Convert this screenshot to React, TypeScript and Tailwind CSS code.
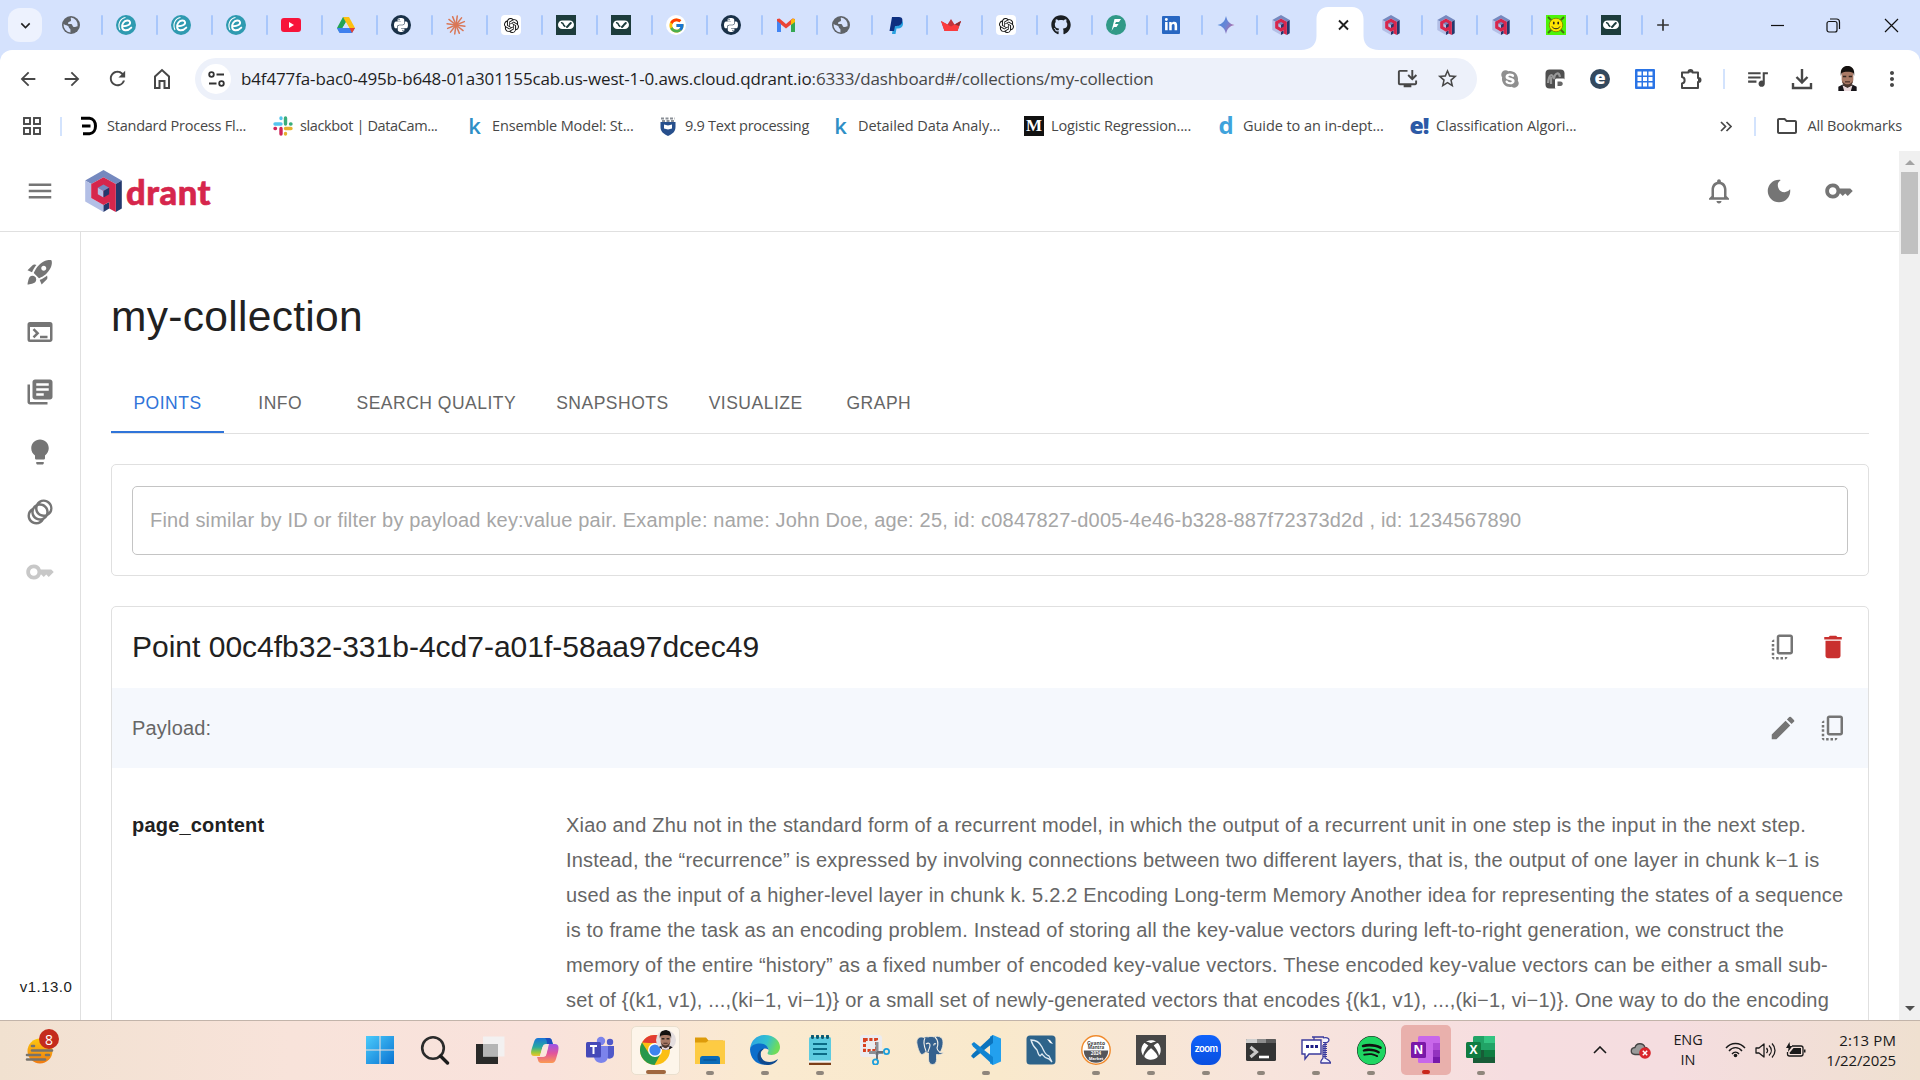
import React from "react";
import {
  MdMenu, MdRocketLaunch, MdTerminal, MdLibraryBooks, MdLightbulb, MdAnimation, MdKey,
  MdOutlineNotifications, MdDarkMode, MdCopyAll, MdDelete, MdEdit, MdArrowBack, MdArrowForward,
  MdRefresh, MdInstallDesktop, MdStarBorder, MdQueueMusic,
  MdMoreVert, MdOutlineFolder, MdExpandMore, MdAdd,
} from "react-icons/md";
import { FaGithub, FaPaypal, FaLinkedinIn, FaXbox, FaSpotify, FaSkype, FaPython } from "react-icons/fa";
import { SiOpenai } from "react-icons/si";
import { FcGoogle } from "react-icons/fc";

type Kids = { children?: React.ReactNode; className?: string };

/* ---------- favicons ---------- */

const Svg = ({ children, className = "size-5", box = "0 0 20 20" }: Kids & { box?: string }) => (
  <svg viewBox={box} className={`${className} shrink-0`} fill="none">{children}</svg>
);

const Globe = () => (
  <Svg>
    <circle cx="10" cy="10" r="9" fill="#5f6368" />
    <path d="M10 2.500c-1 1.500.8 2.200-.2 3.400-.9 1-2.500.4-2.800 2-.2 1.200 1.200 1.200 2.800 1.200 2 0 1.200 2.600 3 2.900 1.700.2 2-.8 3.800-.8A7.500 7.500 0 0 0 10 2.500zM2.600 9c1.600 1.600 5 1 5.200 3.200.1 1.500 1.800 1 1.700 2.800-.1 1-.2 1.600.1 2.400A7.500 7.500 0 0 1 2.600 9z" fill="#d6e2fd" />
  </Svg>
);

const Teal = () => (
  <Svg>
    <circle cx="10" cy="10" r="10" fill="#2f9ab0" />
    <path d="M7 11.200c4.500 0 7.800-1.800 7-4.200-.8-2.300-4.700-2-6.700.8-2.100 3-1.600 7.200 2 7.500 2.300.2 4.400-1 6-2.700" stroke="#fff" strokeWidth="1.900" strokeLinecap="round" />
    <path d="M4 15C1.200 9 4.500 3.200 9.500 2.500" stroke="#fff" strokeWidth="1.100" />
  </Svg>
);

const Youtube = () => (
  <Svg>
    <rect y="3" width="20" height="14" rx="3" fill="#f7143a" />
    <path d="M8 7l5 3-5 3z" fill="#fff" />
  </Svg>
);

const Drive = () => (
  <Svg>
    <path d="M7 2h6l-6.800 11.500L3.500 17.500 1 13z" fill="#23a455" />
    <path d="M7 2h6l6 11h-6z" fill="#fdc00f" />
    <path d="M4.300 13H19l-3 5H3.500L1 13z" fill="#3f80ee" />
    <path d="M19 13h-5.500l2.500 5z" fill="#e8402f" />
    <path d="M10 7.200L6.600 13h6.800z" fill="#d6e2fd" />
  </Svg>
);

const Py = () => (
  <span className="flex size-5 items-center justify-center rounded-full bg-[#1a3148]">
    <FaPython className="size-[16px] text-white" />
  </span>
);

const Claude = () => (
  <Svg>
    {[0, 30, 60, 90, 120, 150, 180, 210, 240, 270, 300, 330].map((a) => (
      <path key={a} d="M10 10V1" stroke="#d97757" strokeWidth="1.500" strokeLinecap="round" transform={`rotate(${a + 8} 10 10)`} />
    ))}
  </Svg>
);

const Gpt = () => (
  <span className="flex size-5 items-center justify-center rounded-[4px] bg-white">
    <SiOpenai className="size-[15px] text-[#111]" />
  </span>
);

const Lang = () => (
  <Svg>
    <rect width="20" height="20" fill="#1d3c3c" />
    <rect x="2" y="5.500" width="16" height="8.500" rx="4.250" fill="#fff" />
    <path d="M5 7.800c1.500-.4 2.300.8 2.800 2.400l1.500 1.500" stroke="#1d3c3c" strokeWidth="1.600" />
    <path d="M11 12l1.500-1.500M13 9.800L14.800 8" stroke="#1d3c3c" strokeWidth="2" strokeLinecap="round" />
  </Svg>
);

const Google = () => (
  <span className="flex size-5 items-center justify-center rounded-full bg-white"><FcGoogle className="size-[17px]" /></span>
);

const Gmail = () => (
  <Svg>
    <path d="M1 4v13h4V9.500l5 4 5-4V17h4V4l-2.500-.5L10 9 3.500 3.500z" fill="#ea4335" />
    <path d="M1 6v11h4V9z" fill="#4285f4" />
    <path d="M15 9v8h4V6z" fill="#34a853" />
    <path d="M15 5.200l2-1.700 2 1V7l-4 3z" fill="#fbbc04" />
  </Svg>
);

const Paypal = () => (
  <Svg>
    <path d="M8 6h8c2 1 1.500 7.500-4 7.500h-1.500L9.500 19H6z" fill="#2aa1e0" />
    <path d="M6 2h7c3.500 0 4 3 3 5.500-1 2.800-3 3.500-7 3.500L8 16H3.500z" fill="#0d2f80" />
  </Svg>
);

const Streamlit = () => (
  <Svg>
    <path d="M0 6l6.500 3.500L10 4l3.500 5.500L20 6l-3.500 10h-13z" fill="#c3343c" />
    <path d="M0 6l10 5.500L20 6l-3.500 10h-13z" fill="#fb3b3e" />
    <path d="M14 9.500L20 6l-2 5z" fill="#7d353b" />
  </Svg>
);

const Github = () => <FaGithub className="size-5 text-[#1b1f23]" />;

const Flash = () => (
  <Svg>
    <circle cx="10" cy="10" r="10" fill="#319987" />
    <path d="M8.500 4h6.500l-2 3h-3l-1 2h3.500l-2 3H8L5.500 16z" fill="#fff" />
  </Svg>
);

const Linkedin = () => (
  <span className="flex size-[18px] items-center justify-center rounded-[1px] bg-[#2867c2]"><FaLinkedinIn className="size-[14px] text-white" /></span>
);

const Gemini = () => (
  <Svg>
    <defs>
      <linearGradient id="gem" x1="0" y1="0" x2="20" y2="10" gradientUnits="userSpaceOnUse">
        <stop stopColor="#3c8bd9" /><stop offset=".6" stopColor="#6a85d6" /><stop offset="1" stopColor="#c0669c" />
      </linearGradient>
    </defs>
    <path d="M10 1c1.200 5.300 3.500 8 8.500 9-5 1-7.300 3.700-8.500 9-1.200-5.300-3.500-8-8.500-9 5-1 7.300-3.700 8.500-9z" fill="url(#gem)" />
  </Svg>
);

const Cube = ({ className = "h-5 w-[18px]" }: Kids) => (
  <Svg className={className} box="0 0 36.6 42">
    <path d="M18.300 0L36.600 10.500 30.600 14 18.300 7.300 6 14 0 10.500z" fill="#7589bf" />
    <path d="M0 10.500L6 14v14l12.300 7v7L0 31.500z" fill="#b3bfe6" />
    <path d="M36.600 10.500v28L30.600 42V14zM18.300 35l5.700-3v6.600L18.300 42z" fill="#24386c" />
    <path d="M18.300 7.300L30.600 14v28L24 38.600V32l-5.700 3L6 28V14z" fill="#d6264c" />
    <path d="M18.300 14.600L24 17.700l-5.700 3.200-5.700-3.200z" fill="#7589bf" />
    <path d="M12.600 17.700l5.700 3.200v6.600l-5.700-3.200z" fill="#b3bfe6" />
    <path d="M24 17.700l-5.700 3.200v6.600l5.700-3.200z" fill="#24386c" />
  </Svg>
);

const Smiley = () => (
  <Svg>
    <rect width="20" height="20" fill="#4df50a" />
    <path d="M2 2l16 16M18 2L2 18" stroke="#4a6b10" strokeWidth="1.800" />
    <circle cx="10" cy="10" r="6.800" fill="#ffe600" stroke="#7a7a00" strokeWidth=".8" />
    <ellipse cx="7.800" cy="8" rx=".9" ry="1.500" fill="#222" /><ellipse cx="12.200" cy="8" rx=".9" ry="1.500" fill="#222" />
    <path d="M6 11.500c1.500 3 6.500 3 8 0" stroke="#222" strokeWidth="1" />
  </Svg>
);

/* ---------- browser tab strip ---------- */

const tabsBefore = [Globe, Teal, Teal, Teal, Youtube, Drive, Py, Claude, Gpt, Lang, Lang, Google, Py, Gmail, Globe, Paypal, Streamlit, Gpt, Github, Flash, Linkedin, Gemini, Cube];
const tabsAfter = [Cube, Cube, Cube, Smiley, Lang];

const Tab = ({ icon: Icon, sep }: { icon: React.ComponentType; sep: boolean }) => (
  <div className="flex h-full w-[55px] shrink-0 items-center justify-between pl-[13px]">
    <span className="flex w-5 justify-center"><Icon /></span>
    {sep && <span className="h-5 w-[2.5px] rounded-full bg-[#a9c7fb]" />}
  </div>
);

const TabStrip = () => (
  <div className="flex h-[50px] items-center bg-[#d5e2fd]">
    <button className="ml-2 mr-[6px] flex h-[34px] w-[34px] shrink-0 items-center justify-center rounded-xl bg-[#edf2fe]">
      <MdExpandMore className="size-[19px] text-[#1f1f1f]" />
    </button>
    {tabsBefore.map((I, i) => <Tab key={i} icon={I} sep={i !== 22} />)}
    <div className="flex h-full w-[55px] shrink-0 items-end">
      <svg viewBox="0 0 78 43" className="-ml-[12.5px] -mr-[10.5px] h-[43px] w-[78px] shrink-0">
        <path d="M0 43C9 43 15.500 38 15.500 29V12C15.500 5 20 0 27 0H51C58 0 62.500 5 62.500 12V29C62.500 38 69 43 78 43Z" fill="#fff" />
        <path d="M38 13.500l9 9M47 13.500l-9 9" stroke="#1f1f1f" strokeWidth="1.900" />
      </svg>
    </div>
    {tabsAfter.map((I, i) => <Tab key={i} icon={I} sep />)}
    <MdAdd className="ml-[10px] size-[20px] text-[#333]" />
    <div className="ml-auto flex items-center pr-[21px]">
      <Svg className="size-[15px]" box="0 0 15 15"><path d="M1 7.500h13" stroke="#111" strokeWidth="1.200" /></Svg>
      <Svg className="ml-[41px] size-[15px]" box="0 0 15 15">
        <path d="M4 1h6.500A3 3 0 0 1 13.500 4v7" stroke="#111" strokeWidth="1.200" /><rect x="1" y="3.500" width="10" height="10.500" rx="2" stroke="#111" strokeWidth="1.200" />
      </Svg>
      <Svg className="ml-[43px] size-[15px]" box="0 0 15 15"><path d="M1 1l13 13M14 1L1 14" stroke="#111" strokeWidth="1.200" /></Svg>
    </div>
  </div>
);

/* ---------- toolbar ---------- */

const Cell = ({ children, className = "" }: Kids) => (
  <span className={`flex shrink-0 items-center justify-center ${className}`}>{children}</span>
);

const Avatar = ({ className = "h-[30px] w-[22px]" }: Kids) => (
  <Svg className={className} box="0 0 22 30">
    <path d="M0 25l6-3h10l6 3v5H0z" fill="#17151a" />
    <path d="M5 23l6 3 6-3-2 7H7z" fill="#ead9dc" />
    <path d="M4 8c0-4 14-4 14 0v8c0 5-4 9-7 9s-7-4-7-9z" fill="#a97a66" />
    <path d="M3 12C2 3 6 0 11 0s9 3 8 12l-1-3.500c-3-2-11-2-14 0z" fill="#15110f" />
    <path d="M5.500 12.500h4M12.500 12.500h4" stroke="#33261f" strokeWidth="1.800" />
    <path d="M8 19h6" stroke="#4a2f28" strokeWidth="1.500" />
    <path d="M4.500 18c1 5 4 7.500 6.500 7.500s5.500-2.500 6.500-7.500c-2 3-4 4-6.500 4s-4.500-1-6.500-4z" fill="#4a352d" />
  </Svg>
);

const Toolbar = () => (
  <div className="bg-[#d5e2fd]">
    <div className="flex h-[54px] items-center rounded-t-xl bg-white pb-px pr-[13px] pt-1">
      <Cell className="ml-[14px] w-7"><MdArrowBack className="size-[22px] text-[#474747]" /></Cell>
      <Cell className="ml-4 w-7"><MdArrowForward className="size-[22px] text-[#474747]" /></Cell>
      <Cell className="ml-[17px] w-7"><MdRefresh className="size-[23px] text-[#474747]" /></Cell>
      <Cell className="ml-[17px] w-7">
        <Svg className="h-[22px] w-[18px]" box="0 0 18 22"><path d="M2 8.500L9 2l7 6.500V20h-4.500v-7h-5v7H2z" stroke="#474747" strokeWidth="2" /></Svg>
      </Cell>
      <div className="ml-[19px] flex h-[42px] w-[1282px] shrink-0 items-center rounded-full bg-[#edf1fa] pl-[6px]">
        <span className="flex size-[30px] items-center justify-center rounded-full bg-white">
          <Svg className="h-[16px] w-[17px]" box="0 0 17 16">
            <circle cx="3.500" cy="3.500" r="2.300" stroke="#333" strokeWidth="1.800" /><path d="M8.500 3.500H16M1 12.500h7.500" stroke="#333" strokeWidth="1.800" /><circle cx="13.500" cy="12.500" r="2.300" stroke="#333" strokeWidth="1.800" />
          </Svg>
        </span>
        <span className="ml-[10px] whitespace-nowrap pt-px font-['Open_Sans'] text-[17px] tracking-[-0.14px] text-[#474747]">
          <span className="text-[#1f1f1f]">b4f477fa-bac0-495b-b648-01a301155cab.us-west-1-0.aws.cloud.qdrant.io</span>:6333/dashboard#/collections/my-collection
        </span>
        <MdInstallDesktop className="ml-auto size-[23px] text-[#474747]" />
        <MdStarBorder className="ml-[17px] mr-[18px] size-[23px] text-[#474747]" />
      </div>
      <Cell className="ml-[20px] w-[26px]"><FaSkype className="size-[20px] text-[#8f8f8f]" /></Cell>
      <Cell className="ml-[19px] w-[26px]">
        <Svg>
          <rect x=".5" y=".5" width="19" height="19" rx="4" fill="#4f4f4f" /><path d="M3 14c1-9 4-10 6-4 1-7 5-7 6-2M6 15V8" stroke="#999" strokeWidth="2.200" />
          <rect x="10" y="9.500" width="10" height="10.500" rx="1.500" fill="#fff" /><path d="M12.500 12.500h3c3 0 3 4.500 0 4.500h-3z" fill="#666" />
        </Svg>
      </Cell>
      <Cell className="ml-[19px] w-[26px]">
        <span className="flex size-5 items-center justify-center rounded-full bg-[#34495e] pb-[3px] font-['Open_Sans'] text-[18px] font-extrabold leading-none text-white">e</span>
      </Cell>
      <Cell className="ml-[19px] w-[26px]">
        <Svg>
          <rect width="20" height="20" rx="1" fill="#2a74e6" />
          {[2.5, 8, 13.5].map((x) => [2.5, 8, 13.5].map((y) => <rect key={`${x}-${y}`} x={x} y={y} width="4" height="4" fill="#fff" />))}
        </Svg>
      </Cell>
      <Cell className="ml-[20px] w-[26px]">
        <Svg className="h-[22px] w-[22px]" box="0 0 22 22">
          <path d="M2 4.500h6.500V4a2 2 0 0 1 4 0v.5H18V10h.5a2 2 0 0 1 0 4H18v6H2v-4.500c3.500-.5 3.500-6 0-6.500z" stroke="#474747" strokeWidth="2" strokeLinejoin="round" />
          <path d="M8.500 4.500V4a2 2 0 0 1 4 0v.5zM18 10h.5a2 2 0 0 1 0 4H18z" fill="#474747" />
        </Svg>
      </Cell>
      <span className="ml-[19px] h-5 w-[2px] bg-[#d3e3fd]" />
      <Cell className="ml-[19px] w-[26px]"><MdQueueMusic className="size-[25px] text-[#474747]" /></Cell>
      <Cell className="ml-[19px] w-[26px]">
        <Svg className="size-[22px]" box="0 0 22 22"><path d="M11 1v13M5.500 9l5.500 5.500L16.500 9M2 15v5h18v-5" stroke="#474747" strokeWidth="2.400" /></Svg>
      </Cell>
      <Cell className="ml-[19px] w-[26px]"><Avatar className="h-[25px] w-[19px]" /></Cell>
      <MdMoreVert className="ml-auto mr-[3px] size-[24px] shrink-0 text-[#474747]" />
    </div>
  </div>
);

/* ---------- bookmarks ---------- */

const K = () => <span className="pb-[3px] pr-px font-['Open_Sans'] text-[22px] font-semibold leading-none text-[#2f8fc6]">k</span>;

const bookmarks: { w: string; t: string; ts: string; icon: React.ReactNode }[] = [
  { w: "w-[193px]", t: "Standard Process Fl...", ts: "tracking-[-0.23px]", icon: <Svg><path d="M1 2.300h8.500c8 .7 8 14.700 0 15.400H3M2 10h8.500" stroke="#000" strokeWidth="3" /></Svg> },
  { w: "w-[192px]", t: "slackbot | DataCam...", ts: "tracking-[-0.37px]", icon: (
    <Svg>
      <path d="M8 2v.5M2 8h6" stroke="#56c5ee" strokeWidth="3.400" strokeLinecap="round" />
      <path d="M12.500 2v6M18 8h-.5" stroke="#3aad7b" strokeWidth="3.400" strokeLinecap="round" />
      <path d="M12.500 12.500H18M12.500 18v-.5" stroke="#e5b02f" strokeWidth="3.400" strokeLinecap="round" />
      <path d="M8 12.500V18M2 12.500h.5" stroke="#cf2459" strokeWidth="3.400" strokeLinecap="round" />
    </Svg>) },
  { w: "w-[193px]", t: "Ensemble Model: St...", ts: "tracking-[-0.13px]", icon: <K /> },
  { w: "w-[173px]", t: "9.9 Text processing", ts: "tracking-[-0.3px]", icon: (
    <Svg><path d="M2.500 6h15v5c0 5-3.500 7-7.500 9-4-2-7.500-4-7.500-9z" fill="#274f8c" /><path d="M3 2.500h14M4 5h12" stroke="#8a8f96" strokeWidth="2.200" strokeDasharray="3 1.500" /><path d="M6 8.500l4 1 4-1v4l-4 1-4-1z" fill="#fff" /></Svg>) },
  { w: "w-[193px]", t: "Detailed Data Analy...", ts: "tracking-[-0.08px]", icon: <K /> },
  { w: "w-[192px]", t: "Logistic Regression....", ts: "tracking-[-0.15px]", icon: <span className="flex size-5 items-center justify-center bg-[#111] font-['Liberation_Serif'] text-[17px] font-bold text-white">M</span> },
  { w: "w-[193px]", t: "Guide to an in-dept...", ts: "tracking-[-0.06px]", icon: <span className="pb-[2px] font-['Open_Sans'] text-[24px] font-bold leading-none text-[#3fa3dc]">d</span> },
  { w: "w-[193px]", t: "Classification Algori...", ts: "tracking-[-0.08px]", icon: <span className="pb-[2px] font-['Open_Sans'] text-[23px] font-extrabold leading-none tracking-[-1px] text-[#2d5aa6]">e!</span> },
];

const Bookmarks = () => (
  <div className="flex h-[47px] items-center bg-white pb-[3px] pr-[18px] font-['Open_Sans'] text-[14.5px] text-[#474747]">
    <Svg className="ml-[23px] size-[18px]" box="0 0 18 18">
      {[1, 11].map((x) => [1, 11].map((y) => <rect key={`${x}${y}`} x={x} y={y} width="6" height="6" stroke="#474747" strokeWidth="1.900" />))}
    </Svg>
    <span className="ml-[19px] mr-[18px] h-[19px] w-[2px] bg-[#d3e3fd]" />
    {bookmarks.map((b) => (
      <div key={b.t} className={`flex shrink-0 items-center gap-[7px] whitespace-nowrap ${b.w}`}>
        <span className="flex h-5 w-5 shrink-0 items-center justify-center">{b.icon}</span>
        <span className={b.ts}>{b.t}</span>
      </div>
    ))}
    <Svg className="ml-auto h-[11px] w-[12px]" box="0 0 12 11"><path d="M1 1l4.500 4.500L1 10M6.500 1L11 5.500 6.500 10" stroke="#474747" strokeWidth="1.700" /></Svg>
    <span className="ml-[22px] mr-[19px] h-[19px] w-[2px] bg-[#d3e3fd]" />
    <MdOutlineFolder className="mr-2 size-[24px]" />
    <span className="tracking-[-0.16px]">All Bookmarks</span>
  </div>
);

/* ---------- dashboard ---------- */

const navIcons = [MdRocketLaunch, MdTerminal, MdLibraryBooks, MdLightbulb, MdAnimation];

const viewTabs = ["Info", "Search Quality", "Snapshots", "Visualize", "Graph"];

const contentLines = [
  "Xiao and Zhu not in the standard form of a recurrent model, in which the output of a recurrent unit in one step is the input in the next step.",
  "Instead, the “recurrence” is expressed by involving connections between two different layers, that is, the output of one layer in chunk k−1 is",
  "used as the input of a higher-level layer in chunk k. 5.2.2 Encoding Long-term Memory Another idea for representing the states of a sequence",
  "is to frame the task as an encoding problem. Instead of storing all the key-value vectors during left-to-right generation, we construct the",
  "memory of the entire “history” as a fixed number of encoded key-value vectors. These encoded key-value vectors can be either a small sub-",
  "set of {(k1, v1), ...,(ki−1, vi−1)} or a small set of newly-generated vectors that encodes {(k1, v1), ...,(ki−1, vi−1)}. One way to do the encoding",
];

const Dashboard = () => (
  <div className="flex h-[869px] bg-white font-['Liberation_Sans',sans-serif]">
    <div className="flex min-w-0 flex-1 flex-col">
      <header className="flex h-[81px] shrink-0 items-center border-b border-[#e0e0e0] pr-[45px] text-[#757575]">
        <MdMenu className="ml-[25px] size-[30px]" />
        <Cube className="ml-[30px] h-[42px] w-[37px]" />
        <span className="ml-[4px] pt-[3px] font-['Lato'] text-[34.5px] font-black leading-none tracking-[0.5px] text-[#d6264c] [-webkit-text-stroke:0.6px_#d6264c]">drant</span>
        <MdOutlineNotifications className="ml-auto size-[30px]" />
        <MdDarkMode className="ml-[30px] size-[30px]" />
        <MdKey className="ml-[30px] size-[30px]" />
      </header>
      <div className="flex min-h-0 flex-1">
        <nav className="flex w-[81px] shrink-0 flex-col items-center gap-[30px] border-r border-[#e0e0e0] pt-[25px] text-[#757575]">
          {navIcons.map((I, i) => <I key={i} className="size-[30px] shrink-0" />)}
          <MdKey className="size-[30px] shrink-0 text-[#c8c8c8]" />
          <span className="mb-[22px] ml-3 mt-auto text-[15px] tracking-[0.5px] text-[#212121]">v1.13.0</span>
        </nav>
        <main className="min-w-0 flex-1 overflow-hidden pl-[30px] pr-[30px] pt-[59px]">
          <h1 className="text-[42.5px] leading-[52px] tracking-[0.31px] text-[#212121]">my-collection</h1>
          <div className="mt-[30px] flex h-[61px] border-b border-[#e0e0e0] text-[17.5px] uppercase tracking-[0.5px] text-[#666]">
            <div className="flex w-[113px] items-center justify-center border-b-[2px] border-[#2f74d9] pt-[2px] text-[#2f74d9]">Points</div>
            {viewTabs.map((t) => <div key={t} className="flex min-w-[112.5px] items-center justify-center whitespace-nowrap px-5">{t}</div>)}
          </div>
          <section className="mt-[30px] h-[112px] rounded-[5px] border border-[#e0e0e0] p-5 pt-[21px]">
            <div className="flex h-[69px] items-center rounded-[5px] border border-[#c4c4c4] pb-[2px] pl-[17px] text-[20px] tracking-[0.185px] text-[#a6a6a6]">
              <span className="whitespace-nowrap">Find similar by ID or filter by payload key:value pair. Example: name: John Doe, age: 25, id: c0847827-d005-4e46-b328-887f72373d2d , id: 1234567890</span>
            </div>
          </section>
          <section className="mt-[30px] h-[460px] rounded-[5px] border border-[#e0e0e0]">
            <div className="flex h-[81px] items-center pb-[2px] pl-5 pr-[20px]">
              <h2 className="text-[30px] text-[#212121]">Point 00c4fb32-331b-4cd7-a01f-58aa97dcec49</h2>
              <MdCopyAll className="ml-auto size-[30px] text-[#757575]" />
              <MdDelete className="ml-5 size-[30px] text-[#c9302f]" />
            </div>
            <div className="flex h-20 items-center bg-[#f5f8fd] pl-5 pr-[20px] text-[20px] tracking-[0.19px] text-[#666]">
              Payload:
              <MdEdit className="ml-auto size-[30px] text-[#757575]" />
              <MdCopyAll className="ml-5 size-[30px] text-[#757575]" />
            </div>
            <div className="grid grid-cols-[434px_1fr] pl-5 pt-[40px] text-[20px] leading-[35px] tracking-[0.19px]">
              <div className="font-bold text-[#212121]">page_content</div>
              <div className="whitespace-nowrap text-[#666]">{contentLines.map((l) => <div key={l}>{l}</div>)}</div>
            </div>
          </section>
        </main>
      </div>
    </div>
    <div className="flex w-[21px] shrink-0 flex-col items-center bg-[#f0f0f0]">
      <Svg className="mt-[9px] h-[5px] w-[10px]" box="0 0 10 5"><path d="M0 5l5-5 5 5z" fill="#a3a3a3" /></Svg>
      <div className="mt-[7px] h-[82px] w-[17px] bg-[#c1c1c1]" />
      <Svg className="mb-[9px] mt-auto h-[5px] w-[10px]" box="0 0 10 5"><path d="M0 0l5 5 5-5z" fill="#505050" /></Svg>
    </div>
  </div>
);

/* ---------- taskbar ---------- */

const A = ({ children }: Kids) => <Svg className="size-[30px]" box="0 0 30 30">{children}</Svg>;

const apps: { icon: React.ReactNode; run?: boolean; mode?: "chrome" | "note" }[] = [
  { icon: <A><defs><linearGradient id="win" x1="0" y1="0" x2="1" y2="1"><stop stopColor="#4bcbfb" /><stop offset="1" stopColor="#0a73d2" /></linearGradient></defs><path d="M1 1h13.500v13.500H1zM15.500 1H29v13.500H15.500zM1 15.500h13.500V29H1zM15.500 15.500H29V29H15.500z" fill="url(#win)" /></A> },
  { icon: <A><circle cx="13" cy="13" r="10.800" stroke="#2b2b2b" strokeWidth="2.600" /><path d="M20.500 21l7 7" stroke="#1c1c1c" strokeWidth="3.400" strokeLinecap="round" /></A> },
  { icon: <A><rect x="1" y="9" width="22" height="20" fill="#2a2a29" /><rect x="8" y="1.500" width="21.500" height="20" fill="#f2f2f2" fillOpacity=".93" /><path d="M8 9h15v12.500H8z" fill="#b5b5b5" /></A> },
  { icon: (
    <A>
      <defs>
        <linearGradient id="cpa" x1="0" y1="0" x2="0" y2="1"><stop stopColor="#1a74d8" /><stop offset=".5" stopColor="#27a8a0" /><stop offset=".8" stopColor="#9bc93a" /><stop offset="1" stopColor="#f2c02f" /></linearGradient>
        <linearGradient id="cpb" x1="0" y1="0" x2="0" y2="1"><stop stopColor="#9a55e8" /><stop offset=".5" stopColor="#e2559b" /><stop offset="1" stopColor="#fb9a52" /></linearGradient>
      </defs>
      <path d="M8 3h11c3 0 3 4 4 6h-7c-2 0-3 1-3.500 3L10 21H4C0 21 1 16 2 13l2-6c.8-2.500 2-4 4-4z" fill="url(#cpa)" />
      <path d="M22 28H11c-3 0-3-4-4-6h6c2 0 3-1 3.500-3L19 9h6c4 0 4 4 3 8l-2 7c-.8 2.500-2 4-4 4z" fill="url(#cpb)" />
      <path d="M15 3h4c3 0 3 4 4 6h-6c0-3-.5-5-2-6z" fill="#1c4fbf" />
      <path d="M12.500 12h5.500l-2.500 9H10z" fill="#fbe7dc" />
    </A>) },
  { icon: (
    <A>
      <circle cx="16" cy="6" r="4.200" fill="#7b83eb" /><circle cx="25" cy="7" r="3.200" fill="#5059c9" />
      <path d="M20 11h9v8c0 6-8 6-9 1z" fill="#5059c9" /><path d="M8 11h15v10c0 9-13 9-14 1z" fill="#7b83eb" />
      <rect x="1" y="7" width="15" height="15.500" rx="1.500" fill="#4549b8" /><path d="M5 11h7M8.500 11v8" stroke="#fff" strokeWidth="2" />
    </A>) },
  { mode: "chrome", icon: (
    <A>
      <circle cx="15" cy="15" r="15" fill="#fbbf13" />
      <path d="M2 7.500A15 15 0 0 1 28 7.500L22 15 15 8H9z" fill="#e23c31" /><path d="M2 7.500A15 15 0 0 0 14.500 30L20 20 8 17z" fill="#27984b" />
      <circle cx="15" cy="15" r="7" fill="#fff" /><circle cx="15" cy="15" r="5.600" fill="#3d84ee" />
    </A>) },
  { run: true, icon: <A><path d="M0 2.500h11l2.500 3H28V12H0z" fill="#dd9b0a" /><path d="M0 7.500h11l2.500-2H30V29H0z" fill="#fdcb43" /><path d="M5 24c0-2 1-3 2.500-3h15c1.500 0 2.500 1 2.500 3v5H5z" fill="#0a6bb8" /><path d="M8.500 25h13" stroke="#084a86" /></A> },
  { run: true, icon: (
    <A>
      <defs><linearGradient id="edg" x1="0" y1="0" x2="1" y2=".3"><stop stopColor="#2b9fe8" /><stop offset=".6" stopColor="#33c1cf" /><stop offset="1" stopColor="#6fdc5a" /></linearGradient></defs>
      <path d="M0 14C1 5 7 0 15 0c9 0 15 6 15 12 0 5-4 8-8.500 8-3 0-4-1-4-2 .8-1 1-2 1-3 0-3-3-5-7-5C6 10 1 11 0 14z" fill="url(#edg)" />
      <path d="M0 14c1-4 6-5.500 10-5.500 5 0 8.500 3 8.500 6.500 0 0-1-1.500-3.500-1.500s-4.500 2.500-4.500 5.500c0 5.500 4.500 9.500 8 10C8 32 0 24 0 14z" fill="#0c6ecb" />
      <path d="M10.500 19c0 5 4 8 9 8 3 0 5.500-1 8.500-3-2 4-6 6-11 6-6 0-9.500-4-9.500-8.500 0-4 3-8 7.500-8-2.500 1-4.500 3-4.500 5.500z" fill="#0f4a8f" />
    </A>) },
  { run: true, icon: <A><rect x="4" y="2" width="22" height="25" rx="1.500" fill="#5dcbe0" /><path d="M4 27.500h22v2.500H4z" fill="#7d3f17" /><path d="M4 25.500h22v2H4z" fill="#f4f4f4" /><path d="M8 9h14M8 14h14M8 19h14" stroke="#0b6b86" strokeWidth="2" /><path d="M7.500 1v1.500M12.500 1v1.500M17.500 1v1.500M22.500 1v1.500" stroke="#0c5a72" strokeWidth="3" strokeLinecap="round" /></A> },
  { icon: <A><rect x="0" y="0" width="22" height="22" rx="3" fill="#ececf0" /><rect x="4.500" y="4.500" width="12" height="11" stroke="#d8401f" strokeWidth="3" strokeDasharray="3.200 1.600" /><path d="M17 7v13M9 17.500h14" stroke="#8b8f96" strokeWidth="3" /><path d="M17 17v7M17 17h6" stroke="#6a6f77" strokeWidth="2" /><circle cx="26.500" cy="16.500" r="2.600" stroke="#1c9fdc" strokeWidth="1.800" /><circle cx="15.500" cy="27" r="2.600" stroke="#1c9fdc" strokeWidth="1.800" /></A> },
  { icon: (
    <A>
      <path d="M9 2.500C4 .5 1 4 2 9c1 5 3 10.500 5 10.500 1.500 0 3-2 4-3 .5 1 1.500 1.500 2.500 1.500V24c0 3.500 1.500 5.500 4 5.500s4-2 4-5v-5c3 .5 6-.5 7.500-2h-4C28 13 29.500 5 26 2.500 24 1 21 1 19 2c-2-.8-4-.8-6 0-1-.5-3-.3-4 .5z" fill="#35618e" stroke="#f3ead9" strokeWidth=".8" />
      <path d="M10 3c-2 3-1 8 1 13M20 2c3 3 3.500 7 2 11 0 2 1 3 3 4.500M11 9c2-1.500 4-1 4 1 0 3-1.500 4-2 7M21 9c-1.500-1-2.500 0-2 1.500" stroke="#f7f3ea" strokeWidth="1.100" />
    </A>) },
  { run: true, icon: <A><path d="M22 0l8 3.500v23L22 30l-3-1.500V1.500z" fill="#23a0ee" /><path d="M22 0L2 18.500 0 21l2.500 2.500L22 8z" fill="#0b73bd" /><path d="M22 30L2 11.500.500 9 3 7l19 15z" fill="#1084d2" /></A> },
  { icon: <A><rect x=".5" y=".5" width="29" height="29" rx="3.500" fill="#2d638a" /><path d="M5 5c6 0 9 3 11 7s3 8 7 9l3 6-3-3c-5-1-6-4-7-5l-2 2c-2-1-2-4-3-6-3-3-5-6-6-10z" stroke="#dfeaf2" strokeWidth="1.300" /><path d="M21 4l3 1 3 4-3-1z" fill="#fff" /></A> },
  { run: true, icon: (
    <A>
      <circle cx="15" cy="15" r="14.200" fill="#fff" stroke="#f08a2c" strokeWidth="1.400" /><path d="M2.800 15.500h24.400a12.200 12.200 0 0 1-24.400 0z" fill="#55565a" />
      <text x="15" y="9.500" textAnchor="middle" fontSize="5" fontWeight="700" fontFamily="Open Sans" fill="#444">Gyanto</text>
      <text x="15" y="14.300" textAnchor="middle" fontSize="4.500" fontWeight="700" fontFamily="Open Sans" fill="#444">Mantra</text>
      <text x="15" y="20" textAnchor="middle" fontSize="4.500" fontWeight="700" fontFamily="Open Sans" fill="#fff">2024</text>
      <text x="15" y="24.500" textAnchor="middle" fontSize="4" fontWeight="700" fontFamily="Open Sans" fill="#fff">Market</text>
    </A>) },
  { run: true, icon: <span className="flex size-[30px] items-center justify-center bg-[#474747]"><FaXbox className="size-[20px] text-white" /></span> },
  { run: true, icon: <span className="flex size-[30px] items-center justify-center rounded-[11px] bg-gradient-to-t from-[#0a4fe0] to-[#0f62fb] pb-[2px] font-['Inter'] text-[9.5px] font-semibold tracking-[-0.6px] text-white">zoom</span> },
  { run: true, icon: <A><rect y="4" width="30" height="22" rx="1.500" fill="#333434" /><path d="M0 5.500C0 4.500.5 4 1.500 4H11v4H0z" fill="#cfcfcf" /><path d="M11 4h9v4h-9z" fill="#8e8e8e" /><path d="M20 4h8.500c1 0 1.500.5 1.500 1.500V8H20z" fill="#5a5a5a" /><path d="M4.500 12l6 5-6 5" stroke="#c8c8c8" strokeWidth="3" /><path d="M13 22h10" stroke="#fff" strokeWidth="2.600" /></A> },
  { run: true, icon: <A><path d="M11 2h12M13 2v4M22 3c3-1 6 0 6 2s-3 3-4 3v15c2 1 4 2 6 5H20c-1-2 1-3 2-5V10" stroke="#3b3b9d" strokeWidth="1.300" fill="#f3f3ff" /><path d="M24 7v16" stroke="#3b3b9d" strokeWidth="4" strokeDasharray="1 1" /><path d="M1 5h19v14H8l-4 5v-5H1z" fill="#fff" stroke="#3b3b9d" strokeWidth="1.400" /><path d="M5 11.500h3M9.500 11.500h3M14 11.500h3" stroke="#1d1d86" strokeWidth="3" /></A> },
  { run: true, icon: <span className="flex size-[29px] items-center justify-center rounded-full bg-[#111]"><FaSpotify className="size-[29px] text-[#1fd662]" /></span> },
  { mode: "note", icon: <A><rect x="7" y="1" width="22" height="27" rx="1.500" fill="#c867ea" /><path d="M22 8h7v7h-7z" fill="#ae4bd5" /><path d="M22 15h7v6.500h-7z" fill="#9332bf" /><path d="M22 21.500h7V28h-7z" fill="#7719aa" /><rect x="0" y="7" width="15" height="16" rx="1.500" fill="#7a18a8" /><text x="7.500" y="19" textAnchor="middle" fontFamily="Open Sans" fontWeight="700" fontSize="12" fill="#fff">N</text></A> },
  { run: true, icon: <A><rect x="7" y="1" width="22" height="27" rx="1.500" fill="#21a366" /><path d="M18 1h11v7H18z" fill="#33c481" /><path d="M7 15h11v7H7z" fill="#185c37" /><path d="M18 15h11v7H18z" fill="#107c41" /><path d="M7 22h22v6H7z" fill="#185c37" /><rect x="0" y="7" width="15" height="16" rx="1.500" fill="#107c41" /><text x="7.500" y="19" textAnchor="middle" fontFamily="Open Sans" fontWeight="700" fontSize="12" fill="#fff">X</text></A> },
];

const AppCell = ({ icon, run, mode }: (typeof apps)[number]) => (
  <div className="flex w-[55.1px] justify-center">
    <div className={
      mode === "chrome" ? "relative mt-[5px] flex h-[49px] w-[49px] justify-center rounded-[5px] border border-[#eadfce] bg-[#fdf5ea] pt-[8px]"
        : mode === "note" ? "relative mt-[4px] flex h-[50px] w-[50px] justify-center rounded-[5px] bg-[#e9b0ac] pt-[10px]"
        : "relative mt-[5px] flex h-[49px] w-[50px] justify-center pt-[9px]"
    }>
      <span className="flex h-[30px] w-[30px] items-center justify-center">{icon}</span>
      {mode === "chrome" && (
        <span className="absolute right-[3px] top-[3px] flex size-[20px] justify-center overflow-hidden rounded-full bg-[#e3ddde]"><Avatar className="h-[21px] w-[17px]" /></span>
      )}
      {mode === "chrome" && <span className="absolute bottom-0 left-[14px] h-1 w-5 rounded-full bg-[#a0673f]" />}
      {mode === "note" && <span className="absolute bottom-[1px] h-1 w-2 rounded-full bg-[#c9281c]" />}
      {run && <span className="absolute bottom-0 h-1 w-2 rounded-full bg-[#8f867c]" />}
    </div>
  </div>
);

const Taskbar = () => (
  <div className="flex h-[60px] border-t border-[#c2b4aa] bg-[linear-gradient(90deg,#f1e1d0_0%,#f8e3da_15%,#f9e2dc_28%,#faead0_40%,#f9e9cc_52%,#f7e4dc_66%,#f6dde0_79%,#f5dde0_87%,#efe0d0_100%)] text-[#1a1a1a]">
    <div className="relative ml-[25px] mt-[12px] h-[32px] w-[35px]">
      <Svg className="mt-1 h-[28px] w-[30px]" box="0 0 30 28">
        <defs><linearGradient id="sun" x1="0" y1="0" x2="0" y2="1"><stop stopColor="#fcc80f" /><stop offset="1" stopColor="#f17a10" /></linearGradient></defs>
        <circle cx="15" cy="14" r="12.500" fill="url(#sun)" />
        <path d="M7 9h2M7 13.500h20M2 18h13M21 18h3M2 22.500h18" stroke="#77736c" strokeWidth="2.600" strokeLinecap="round" />
      </Svg>
      <span className="absolute -top-[4px] left-[14px] flex size-5 items-center justify-center rounded-full bg-[#c42b1c] font-['Open_Sans'] text-[14px] text-white">8</span>
    </div>
    <div className="ml-[292px] flex shrink-0">{apps.map((a, i) => <AppCell key={i} {...a} />)}</div>
    <div className="ml-auto flex items-center pb-px pr-[24px] font-['Open_Sans'] text-[14.5px] leading-[20px]">
      <Svg className="h-[8px] w-[14px]" box="0 0 14 8"><path d="M1 7l6-6 6 6" stroke="#1a1a1a" strokeWidth="1.600" /></Svg>
      <Svg className="ml-[23px] h-[18px] w-[21px]" box="0 0 21 18">
        <path d="M5 13.500C0 13 0 7 5 6.500 6 2 13 1 15 6.500c4 0 4 6 1 7z" fill="#9a9a9a" stroke="#444" strokeWidth="1.300" />
        <circle cx="15" cy="12" r="5.800" fill="#d9262c" /><path d="M12.800 9.800l4.400 4.400M17.200 9.800l-4.400 4.400" stroke="#fff" strokeWidth="1.500" />
      </Svg>
      <span className="ml-[20px] w-[34px] text-center tracking-[-0.1px]">ENG<br />IN</span>
      <Svg className="ml-[20px] h-[16px] w-[21px]" box="0 0 21 16">
        <path d="M1 6c5-6 14-6 19 0M4 9c3.500-4.500 9.500-4.500 13 0M7 12c2-2.500 5-2.500 7 0" stroke="#1a1a1a" strokeWidth="1.400" /><circle cx="10.500" cy="13.500" r="1.800" fill="#1a1a1a" />
      </Svg>
      <Svg className="ml-[9px] h-[17px] w-[21px]" box="0 0 21 17">
        <path d="M1 6h3l5-4v13l-5-4H1z" stroke="#1a1a1a" strokeWidth="1.300" strokeLinejoin="round" /><path d="M11.500 6c1.300 1.500 1.300 3.500 0 5M14 3.500c3 3 3 7 0 10M17 1.500c4 4 4 10 0 14" stroke="#1a1a1a" strokeWidth="1.300" />
      </Svg>
      <Svg className="ml-[10px] h-[16px] w-[20px]" box="0 0 20 16">
        <path d="M6 4h9c1.500 0 2 .5 2 2v6c0 1.500-.5 2-2 2H3.500c-1.500 0-2-.5-2-2v-2" stroke="#1a1a1a" strokeWidth="1.300" /><path d="M7.500 6H15v6H3.800v-1.500z" fill="#1a1a1a" /><path d="M18 7.500h1.500v3H18z" fill="#1a1a1a" /><path d="M3.500 0L0 6h2.500L2 10l4.500-6H4z" fill="#1a1a1a" />
      </Svg>
      <span className="ml-[19px] w-[71px] whitespace-nowrap text-right text-[15px]"><span className="tracking-[0.1px]">2:13 PM</span><br /><span className="tracking-[-0.15px]">1/22/2025</span></span>
    </div>
  </div>
);

export default function App() {
  return (
    <div className="flex h-[1080px] w-[1920px] flex-col overflow-hidden bg-white">
      <TabStrip />
      <Toolbar />
      <Bookmarks />
      <Dashboard />
      <Taskbar />
    </div>
  );
}
